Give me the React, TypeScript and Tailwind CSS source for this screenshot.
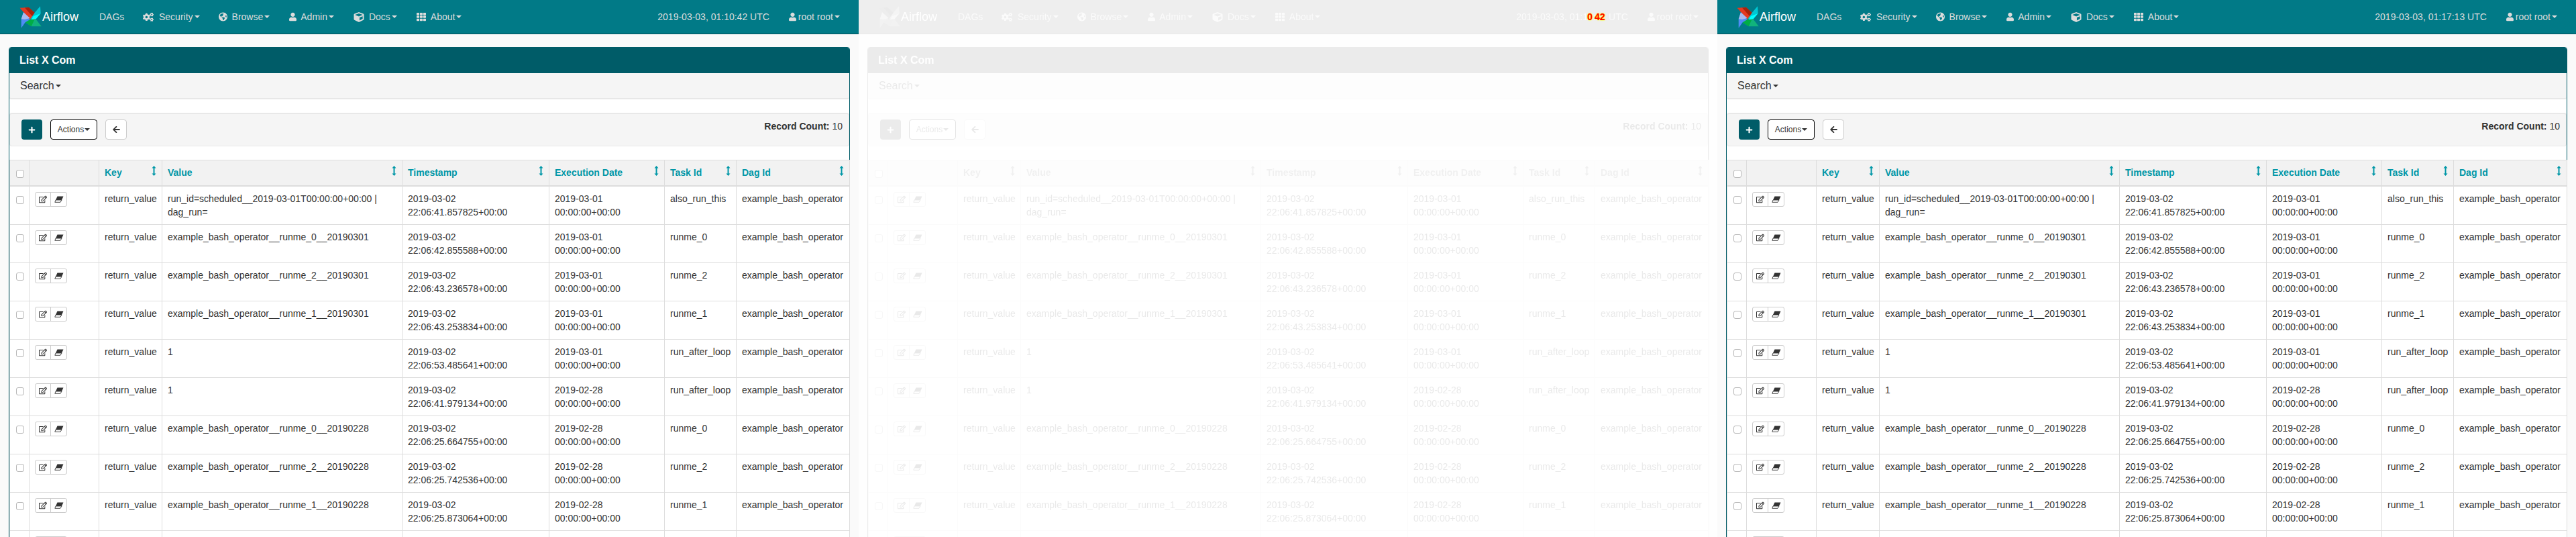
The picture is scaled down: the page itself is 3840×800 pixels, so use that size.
import React from "react";
import { FaCogs, FaGlobeAmericas, FaUser, FaCube, FaTh, FaPlus, FaArrowLeft, FaRegEdit } from "react-icons/fa";

const rows: [string, string, string, string][] = [
  ["run_id=scheduled__2019-03-01T00:00:00+00:00 | dag_run=", "22:06:41.857825+00:00", "2019-03-01", "also_run_this"],
  ["example_bash_operator__runme_0__20190301", "22:06:42.855588+00:00", "2019-03-01", "runme_0"],
  ["example_bash_operator__runme_2__20190301", "22:06:43.236578+00:00", "2019-03-01", "runme_2"],
  ["example_bash_operator__runme_1__20190301", "22:06:43.253834+00:00", "2019-03-01", "runme_1"],
  ["1", "22:06:53.485641+00:00", "2019-03-01", "run_after_loop"],
  ["1", "22:06:41.979134+00:00", "2019-02-28", "run_after_loop"],
  ["example_bash_operator__runme_0__20190228", "22:06:25.664755+00:00", "2019-02-28", "runme_0"],
  ["example_bash_operator__runme_2__20190228", "22:06:25.742536+00:00", "2019-02-28", "runme_2"],
  ["example_bash_operator__runme_1__20190228", "22:06:25.873064+00:00", "2019-02-28", "runme_1"],
  ["1", "22:06:25.562113+00:00", "2019-02-28", "also_run_this"],
];

function Caret({ className = "" }: { className?: string }) {
  return <span className={`inline-block w-0 h-0 border-x-4 border-t-4 border-x-transparent border-t-current align-middle ${className}`} />;
}

function Logo() {
  return (
    <svg viewBox="0 0 33 33" className="w-[33px] h-[33px] shrink-0">
      <path d="M0.5 2.7 L14 2 L23.7 11 L15.7 20 Z" fill="#e43921" />
      <path d="M8 2.4 L14 2 L23.7 11 L19.5 15.5 Z" fill="#a8230c" />
      <path d="M31 0.3 L31.7 11 L21 16.5 L15.7 20 L22.7 10 Z" fill="#00c7d4" />
      <path d="M31.7 11 L24.5 19.5 L17 20.5 L21 15 Z" fill="#0ff" />
      <path d="M32.7 30.3 L17.7 30.3 L8.7 24.3 L15.7 20 L24.3 19.3 Z" fill="#11b37c" />
      <path d="M17.7 30.3 L8.7 24.3 L15.7 20 L22 21 Z" fill="#00ad46" />
      <path d="M2.7 32.7 L2.7 19.3 L6 9.3 L15.7 20 L8.7 24.3 Z" fill="#4f8cf5" />
      <path d="M2.7 19.3 L6 9.3 L15.7 18 L8 20 Z" fill="#a8b9ee" />
    </svg>
  );
}

function NavItem({ icon, label, ml, gap }: { icon: React.ReactNode; label: string; ml: string; gap: string }) {
  return (
    <span className={`flex items-center ${ml}`}>
      <span className={`flex items-center ${gap}`}>{icon}</span>
      <span>{label}</span>
      <Caret className="ml-[2px]" />
    </span>
  );
}

function Navbar({ time }: { time: React.ReactNode }) {
  return (
    <div className="h-[51px] bg-[#017a87] border-b border-[#004f5a] flex items-center pl-[29px] pr-[28px] text-[14px] text-[#dcdcdc]">
      <Logo />
      <span className="text-[18px] text-white ml-[1px] w-[56px] whitespace-nowrap">Airflow</span>
      <span className="ml-[29px] w-[37px]">DAGs</span>
      <NavItem ml="ml-[28px]" gap="mr-[8px]" icon={<FaCogs className="w-[16px] h-[15px]" />} label="Security" />
      <NavItem ml="ml-[28px]" gap="mr-[7px]" icon={<FaGlobeAmericas className="w-[13px] h-[14px]" />} label="Browse" />
      <NavItem ml="ml-[29px]" gap="mr-[6px]" icon={<FaUser className="w-[11px] h-[14px]" />} label="Admin" />
      <NavItem ml="ml-[29px]" gap="mr-[7px]" icon={<FaCube className="w-[16px] h-[15px]" />} label="Docs" />
      <NavItem ml="ml-[29px]" gap="mr-[7px]" icon={<FaTh className="w-[14px] h-[14px]" />} label="About" />
      <span className="ml-auto whitespace-pre">{time}</span>
      <span className="flex items-center ml-[29px]">
        <FaUser className="w-[11px] h-[14px] mr-[3px]" />
        <span>root root</span>
        <Caret className="ml-[2px]" />
      </span>
    </div>
  );
}

function Sort() {
  return (
    <svg viewBox="0 0 7 15" className="absolute right-[8px] top-[8px] w-[7px] h-[15px] text-[#0097a7]">
      <path d="M3.5 0 L6.5 3.5 L4.5 3.5 L4.5 11.5 L6.5 11.5 L3.5 15 L0.5 11.5 L2.5 11.5 L2.5 3.5 L0.5 3.5 Z" fill="currentColor" />
    </svg>
  );
}

function Eraser() {
  return (
    <svg viewBox="0 0 14 10" className="w-[14px] h-[10px] text-[#333]">
      <path d="M4.5 0.5 L13.5 0.5 L11 6 L2 6 Z" fill="currentColor" />
      <path d="M2 6 L11 6 L9 9.3 L0.8 9.3 Z" fill="white" stroke="currentColor" strokeWidth="0.9" />
    </svg>
  );
}

function Box() {
  return <input type="checkbox" readOnly className="appearance-none block w-[12px] h-[12px] border border-[#b8b8b8] rounded-[3px] bg-white" />;
}

function Head({ label }: { label?: string }) {
  return (
    <th className="relative border border-[#ddd] border-b-2 p-[8px] text-left font-bold text-[#0097a7] bg-[#f2f2f2] h-[38px]">
      {label}
      {label ? <Sort /> : null}
    </th>
  );
}

function Cell({ children, wide }: { children: React.ReactNode; wide?: boolean }) {
  return <td className={`border border-[#ddd] p-[8px] align-top ${wide ? "whitespace-nowrap" : ""}`}>{children}</td>;
}

function Table() {
  return (
    <table className="w-[1252px] table-fixed border-collapse text-[14px] leading-[20px] text-[#333]">
      <colgroup>
        <col className="w-[29px]" />
        <col className="w-[104px]" />
        <col className="w-[94px]" />
        <col className="w-[358px]" />
        <col className="w-[219px]" />
        <col className="w-[172px]" />
        <col className="w-[107px]" />
        <col className="w-[169px]" />
      </colgroup>
      <thead>
        <tr>
          <th className="border border-[#ddd] border-b-2 bg-[#f2f2f2] pl-[9px] pt-[3px]"><Box /></th>
          <Head />
          <Head label="Key" />
          <Head label="Value" />
          <Head label="Timestamp" />
          <Head label="Execution Date" />
          <Head label="Task Id" />
          <Head label="Dag Id" />
        </tr>
      </thead>
      <tbody>
        {rows.map((r, i) => (
          <tr key={i} className="h-[57px]">
            <td className="border border-[#ddd] pl-[9px] pt-[14px] align-top"><Box /></td>
            <td className="border border-[#ddd] p-[8px] align-top">
              <span className="flex w-[48px] h-[22px] border border-[#ccc] rounded-[3px] bg-white text-[#333]">
                <span className="w-[23px] border-r border-[#ccc] flex items-center justify-center"><FaRegEdit className="w-[12px] h-[12px]" /></span>
                <span className="flex-1 flex items-center justify-center"><Eraser /></span>
              </span>
            </td>
            <Cell>return_value</Cell>
            <Cell>{r[0]}</Cell>
            <Cell>2019-03-02 {r[1]}</Cell>
            <Cell>{r[2]} 00:00:00+00:00</Cell>
            <Cell wide>{r[3]}</Cell>
            <Cell wide>example_bash_operator</Cell>
          </tr>
        ))}
      </tbody>
    </table>
  );
}

function Screen({ time }: { time: React.ReactNode }) {
  return (
    <div className="w-[1280px] h-[800px] overflow-hidden bg-[#fafafa] font-['Liberation_Sans',Arial,sans-serif]">
      <Navbar time={time} />
      <div className="mt-[19px] mx-[13px] border border-[#005c68] rounded-[4px] bg-white">
        <div className="h-[38px] bg-[#005c68] rounded-t-[3px] pl-[15px] flex items-center text-[16px] font-bold text-white">List X Com</div>
        <div className="h-[39px] bg-[#f5f5f5] border-b-2 border-[#e7e7e7] pl-[16px] flex items-center text-[16px] text-[#333] rounded-b-[3px]">
          <span>Search</span>
          <Caret className="ml-[2px]" />
        </div>
        <div className="h-[20px]" />
        <div className="h-[50px] bg-[#f5f5f5] border border-[#e8e8e8] border-t-2 rounded-[4px] flex items-start pl-[17px] pr-[9px] pt-[8px]">
          <span className="w-[31px] h-[30px] bg-[#005c68] rounded-[4px] flex items-center justify-center text-white"><FaPlus className="w-[11px] h-[11px]" /></span>
          <span className="ml-[12px] w-[70px] h-[30px] bg-white border border-black rounded-[4px] flex items-center justify-center text-[12px] text-[#333]">
            <span>Actions</span>
            <Caret className="ml-[1px]" />
          </span>
          <span className="ml-[12px] w-[32px] h-[30px] bg-white border border-[#ccc] rounded-[4px] flex items-center justify-center text-[#333]"><FaArrowLeft className="w-[11px] h-[12px]" /></span>
          <span className="ml-auto text-[14px] leading-[20px] text-[#333]"><strong>Record Count:</strong> 10</span>
        </div>
        <div className="h-[20px]" />
        <Table />
      </div>
    </div>
  );
}

function FadedTime() {
  return (
    <>
      {"2019-03-03, 01:1"}
      <span className="invisible">0</span>
      {":"}
      <span className="invisible">42</span>
      {" UTC"}
    </>
  );
}

export default function App() {
  return (
    <div className="flex w-[3840px] h-[800px] overflow-hidden bg-white">
      <Screen time="2019-03-03, 01:10:42 UTC" />
      <div className="relative w-[1280px] h-[800px]">
        <div className="grayscale opacity-10">
          <Screen time={<FadedTime />} />
        </div>
        <span className="absolute left-[1086px] top-[15px] text-[14px] leading-[20px] font-bold text-[#f00] font-['Liberation_Sans',Arial,sans-serif] [text-shadow:0_0_1px_#ff0,0_0_1px_#ff0,0_0_2px_#ff0]">0</span>
        <span className="absolute left-[1097px] top-[15px] text-[14px] leading-[20px] font-bold text-[#f00] font-['Liberation_Sans',Arial,sans-serif] [text-shadow:0_0_1px_#ff0,0_0_1px_#ff0,0_0_2px_#ff0]">42</span>
      </div>
      <Screen time="2019-03-03, 01:17:13 UTC" />
    </div>
  );
}
